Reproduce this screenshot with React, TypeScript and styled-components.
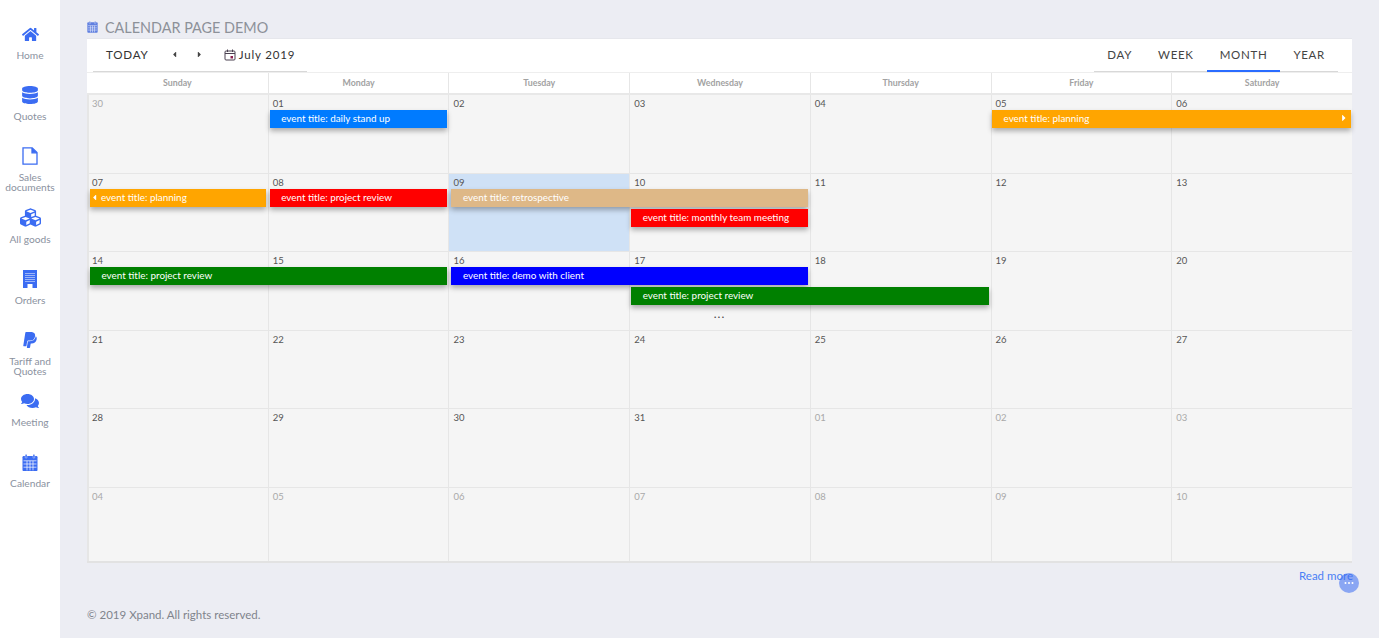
import React from "react";
import styled, { createGlobalStyle } from "styled-components";
import { FaHome, FaDatabase, FaCubes, FaPaypal, FaComments, FaCaretLeft, FaCaretRight } from "react-icons/fa";

const BLUE = "#3b6cf2";

type CalEvent = { title: string; color: string; start: number; span: number; lane: number; prev?: boolean; next?: boolean };
type Week = { days: { label: string; muted?: boolean; today?: boolean }[]; events: CalEvent[]; more?: number };

const d = (label: string, muted = false, today = false) => ({ label, muted, today });

const WEEKS: Week[] = [
  {
    days: [d("30", true), d("01"), d("02"), d("03"), d("04"), d("05"), d("06")],
    events: [
      { title: "daily stand up", color: "#007bff", start: 2, span: 1, lane: 1 },
      { title: "planning", color: "orange", start: 6, span: 2, lane: 1, next: true },
    ],
  },
  {
    days: [d("07"), d("08"), d("09", false, true), d("10"), d("11"), d("12"), d("13")],
    events: [
      { title: "planning", color: "orange", start: 1, span: 1, lane: 1, prev: true },
      { title: "project review", color: "red", start: 2, span: 1, lane: 1 },
      { title: "retrospective", color: "burlywood", start: 3, span: 2, lane: 1 },
      { title: "monthly team meeting", color: "red", start: 4, span: 1, lane: 2 },
    ],
  },
  {
    days: [d("14"), d("15"), d("16"), d("17"), d("18"), d("19"), d("20")],
    events: [
      { title: "project review", color: "green", start: 1, span: 2, lane: 1 },
      { title: "demo with client", color: "blue", start: 3, span: 2, lane: 1 },
      { title: "project review", color: "green", start: 4, span: 2, lane: 2 },
    ],
    more: 4,
  },
  { days: [d("21"), d("22"), d("23"), d("24"), d("25"), d("26"), d("27")], events: [] },
  { days: [d("28"), d("29"), d("30"), d("31"), d("01", true), d("02", true), d("03", true)], events: [] },
  { days: [d("04", true), d("05", true), d("06", true), d("07", true), d("08", true), d("09", true), d("10", true)], events: [] },
];

// the file, building and calendar glyphs in the reference are not in the icon sets
const FileIcon = () => (
  <svg width="16" height="18" viewBox="0 0 16 18" fill="none" stroke={BLUE} strokeWidth="1.3">
    <path d="M1 0.8h9.2L15 5.6v11.6H1z" />
    <path d="M10 1v4.8h5" fill={BLUE} />
  </svg>
);

const BuildingIcon = () => {
  const windows = [];
  for (let y = 3; y < 12; y += 2) {
    for (let x = 2.5; x < 11; x += 2) {
      windows.push(<rect key={`${x}-${y}`} x={x} y={y} width="1" height="1" fill="#fff" />);
    }
  }
  return (
    <svg width="14" height="18" viewBox="0 0 14 18">
      <rect width="14" height="18" fill={BLUE} />
      {windows}
      <rect x="4.5" y="14" width="5" height="4" fill="#fff" />
    </svg>
  );
};

const CalendarIcon = ({ size = 16, color = BLUE }: { size?: number; color?: string }) => (
  <svg width={size} height={size * 1.1} viewBox="0 0 16 17.6">
    <rect x="0.5" y="2" width="15" height="15.2" rx="1.2" fill={color} />
    <path d="M1.5 6.8h13M1.5 10h13M1.5 13.2h13M5 6.8v9.6M8 6.8v9.6M11 6.8v9.6" stroke="#fff" strokeWidth="0.7" />
    <rect x="3.2" y="0.2" width="1.8" height="4" rx="0.9" fill={color} stroke="#fff" strokeWidth="0.4" />
    <rect x="11" y="0.2" width="1.8" height="4" rx="0.9" fill={color} stroke="#fff" strokeWidth="0.4" />
  </svg>
);

const NAV = [
  { label: "Home", icon: <FaHome size={17} /> },
  { label: "Quotes", icon: <FaDatabase size={18} /> },
  { label: "Sales documents", icon: <FileIcon /> },
  { label: "All goods", icon: <FaCubes size={21} /> },
  { label: "Orders", icon: <BuildingIcon /> },
  { label: "Tariff and Quotes", icon: <FaPaypal size={18} /> },
  { label: "Meeting", icon: <FaComments size={18} /> },
  { label: "Calendar", icon: <CalendarIcon /> },
];

const WEEKDAYS = ["Sunday", "Monday", "Tuesday", "Wednesday", "Thursday", "Friday", "Saturday"];

// bars sit a little unevenly against the fractional column widths
const barLeft = (start: number) => (start === 1 || start === 3 ? 3 : start === 6 ? 1.5 : 2);

export default function App() {
  return (
    <>
      <GlobalStyle />
      <Layout>
        <Sidebar>
          {NAV.map((item) => (
            <NavItem key={item.label}>
              <NavIcon>{item.icon}</NavIcon>
              <NavLabel>{item.label}</NavLabel>
            </NavItem>
          ))}
        </Sidebar>
        <Main>
          <PageTitle>
            <CalendarIcon size={11} color="#5f7fe0" />
            CALENDAR PAGE DEMO
          </PageTitle>
          <Card>
            <Toolbar>
              <ToolGroup>
                <TodayButton>TODAY</TodayButton>
                <ArrowButton>
                  <FaCaretLeft size={9} />
                </ArrowButton>
                <ArrowButton>
                  <FaCaretRight size={9} />
                </ArrowButton>
                <DateLabel>
                  <svg width="12" height="12" viewBox="0 0 12 12" fill="none">
                    <rect x="1" y="2" width="10" height="9" rx="1" stroke="#4a4150" strokeWidth="1" />
                    <path d="M1 4.5h10M3.5 0.5v2.5M8.5 0.5v2.5" stroke="#4a4150" strokeWidth="1" />
                    <rect x="6.5" y="7" width="2.5" height="2.5" fill="#8a2050" />
                  </svg>
                  July 2019
                </DateLabel>
              </ToolGroup>
              <ViewTabs>
                <ViewTab>DAY</ViewTab>
                <ViewTab>WEEK</ViewTab>
                <ViewTab $active>MONTH</ViewTab>
                <ViewTab>YEAR</ViewTab>
              </ViewTabs>
            </Toolbar>
            <HeaderRow>
              {WEEKDAYS.map((day) => (
                <HeaderCell key={day}>{day}</HeaderCell>
              ))}
            </HeaderRow>
            <Weeks>
              {WEEKS.map((week, i) => (
                <WeekRow key={i}>
                  {week.days.map((day, j) => (
                    <DayCell key={j} $today={day.today}>
                      <DayNumber $muted={day.muted}>{day.label}</DayNumber>
                    </DayCell>
                  ))}
                  <EventLayer>
                    {week.events.map((ev) => (
                      <EventBar
                        key={ev.title + ev.start}
                        $color={ev.color}
                        $start={ev.start}
                        $span={ev.span}
                        $lane={ev.lane}
                        $prev={ev.prev}
                        $next={ev.next}
                      >
                        {ev.prev && <FaCaretLeft size={9} />}
                        <span>event title: {ev.title}</span>
                        {ev.next && (
                          <NextMark>
                            <FaCaretRight size={10} />
                          </NextMark>
                        )}
                      </EventBar>
                    ))}
                    {week.more && <MoreDots $start={week.more}>...</MoreDots>}
                  </EventLayer>
                </WeekRow>
              ))}
            </Weeks>
          </Card>
          <ReadMoreRow>
            <ReadMore>Read more</ReadMore>
          </ReadMoreRow>
          <Footer>© 2019 Xpand. All rights reserved.</Footer>
        </Main>
      </Layout>
      <Fab>
        <svg width="10" height="4" viewBox="0 0 10 4" fill="#fff">
          <circle cx="1.5" cy="2" r="1" />
          <circle cx="5" cy="2" r="1" />
          <circle cx="8.5" cy="2" r="1" />
        </svg>
      </Fab>
    </>
  );
}

const GlobalStyle = createGlobalStyle`
  html, body {
    margin: 0;
    height: 100%;
    overflow: hidden;
    font-family: Lato, "Liberation Sans", sans-serif;
    background: #ecedf3;
  }
  * { box-sizing: border-box; }
`;
const Layout = styled.div`
  display: flex;
  height: 638px;
`;
const Sidebar = styled.nav`
  width: 60px;
  flex-shrink: 0;
  background: #fff;
  padding-top: 23px;
`;
const NavItem = styled.div`
  height: 61.2px;
  display: flex;
  flex-direction: column;
  align-items: center;
  text-align: center;
`;
const NavIcon = styled.div`
  height: 22px;
  display: flex;
  align-items: center;
  justify-content: center;
  color: ${BLUE};
`;
const NavLabel = styled.div`
  margin-top: 4px;
  font-size: 10.2px;
  line-height: 10px;
  color: #8b92a0;
  padding-top: 1px;
`;
const Main = styled.main`
  flex: 1;
  padding: 0 27px;
  display: flex;
  flex-direction: column;
`;
const PageTitle = styled.h1`
  margin: 0;
  height: 38px;
  padding-top: 17px;
  display: flex;
  align-items: center;
  gap: 7px;
  font-size: 14.4px;
  font-weight: 400;
  line-height: 20px;
  color: #8d9199;
`;
const Card = styled.section`
  background: #f5f5f5;
  border-bottom: 2px solid #e2e2e2;
  display: flex;
  flex-direction: column;
`;
const Toolbar = styled.div`
  height: 35px;
  background: #fff;
  display: flex;
  justify-content: space-between;
  padding: 0 14px 0 6px;
  border-top: 1px solid #e6e7ec;
  border-bottom: 1px solid #eee;
`;
const ToolGroup = styled.div`
  width: 214px;
  height: 33px;
  display: flex;
  align-items: center;
  border-bottom: 1px solid #d8d8d8;
  padding: 0 0 1px 13px;
`;
const TodayButton = styled.span`
  font-size: 11.6px;
  letter-spacing: 0.8px;
  color: #333;
  margin-right: 21px;
`;
const ArrowButton = styled.span`
  width: 25px;
  display: flex;
  justify-content: flex-start;
  color: #444;
`;
const DateLabel = styled.span`
  display: flex;
  align-items: center;
  gap: 3px;
  margin-left: 4px;
  font-size: 11.5px;
  letter-spacing: 0.85px;
  color: #333;
`;
const ViewTabs = styled.div`
  display: flex;
  height: 33px;
  border-bottom: 1px solid #d8d8d8;
`;
const ViewTab = styled.span<{ $active?: boolean }>`
  display: flex;
  align-items: center;
  padding: 0 13px 1px;
  font-size: 11.5px;
  letter-spacing: 0.7px;
  color: #444;
  height: 33px;
  border-bottom: 2px solid ${(p) => (p.$active ? "#2a6cff" : "transparent")};
`;
const HeaderRow = styled.div`
  display: grid;
  grid-template-columns: repeat(7, 1fr);
  height: 22px;
  background: #fff;
  border-bottom: 2px solid #e8e8e8;
`;
const HeaderCell = styled.div`
  border-left: 1px solid #e6e6e6;
  font-size: 8.8px;
  font-weight: 700;
  line-height: 20px;
  text-align: center;
  color: #a2a2a2;
  &:first-child {
    border-left: none;
  }
`;
const Weeks = styled.div`
  display: flex;
  flex-direction: column;
  box-shadow: inset 2px 0 0 #e6e6e6;
`;
const WeekRow = styled.div`
  position: relative;
  display: grid;
  grid-template-columns: repeat(7, 1fr);
  height: 78.5px;
  border-bottom: 1px solid #e6e6e6;
  &:last-child {
    height: 73px;
    border-bottom: none;
  }
`;
const DayCell = styled.div<{ $today?: boolean }>`
  border-left: 1px solid #e6e6e6;
  background: ${(p) => (p.$today ? "#cfe1f6" : "transparent")};
  padding: 3px 0 0 4px;
  &:first-child {
    border-left: none;
    padding-left: 5px;
  }
`;
const DayNumber = styled.span<{ $muted?: boolean }>`
  font-size: 9.5px;
  line-height: 12px;
  display: block;
  color: ${(p) => (p.$muted ? "#a9a9a9" : "#555")};
`;
const EventLayer = styled.div`
  position: absolute;
  top: 15px;
  left: 0;
  right: 0;
  display: grid;
  grid-template-columns: repeat(7, 1fr);
  grid-auto-rows: 18px;
  row-gap: 2px;
  pointer-events: none;
`;
const EventBar = styled.div<{ $color: string; $start: number; $span: number; $lane: number; $prev?: boolean; $next?: boolean }>`
  grid-column: ${(p) => p.$start} / span ${(p) => p.$span};
  grid-row: ${(p) => p.$lane};
  position: relative;
  margin: 0 ${(p) => (p.$next ? 1 : 1.5)}px 0 ${(p) => barLeft(p.$start)}px;
  display: flex;
  align-items: center;
  gap: 2px;
  padding: 0 0 1px ${(p) => (p.$prev ? 0 : 11.5)}px;
  background: ${(p) => p.$color};
  color: #fff;
  font-size: 9.9px;
  line-height: 17px;
  white-space: nowrap;
  box-shadow: 0 3px 5px rgba(0, 0, 0, 0.3);
`;
const NextMark = styled.span`
  position: absolute;
  right: 2px;
  top: 1px;
`;
const MoreDots = styled.div<{ $start: number }>`
  grid-column: ${(p) => p.$start};
  grid-row: 3;
  text-align: center;
  font-size: 12px;
  line-height: 12px;
  letter-spacing: 1px;
  color: #444;
  padding-top: 1px;
`;
const ReadMoreRow = styled.div`
  display: flex;
  justify-content: flex-end;
  padding-top: 6px;
`;
const ReadMore = styled.a`
  margin-right: -1px;
  font-size: 11.5px;
  line-height: 14px;
  color: #4a80f5;
`;
const Footer = styled.footer`
  margin-top: 24px;
  font-size: 11.5px;
  line-height: 16px;
  color: #80848c;
`;
const Fab = styled.div`
  position: fixed;
  left: 1339px;
  top: 573px;
  width: 20px;
  height: 20px;
  border-radius: 50%;
  background: rgba(59, 108, 242, 0.55);
  display: flex;
  align-items: center;
  justify-content: center;
`;
